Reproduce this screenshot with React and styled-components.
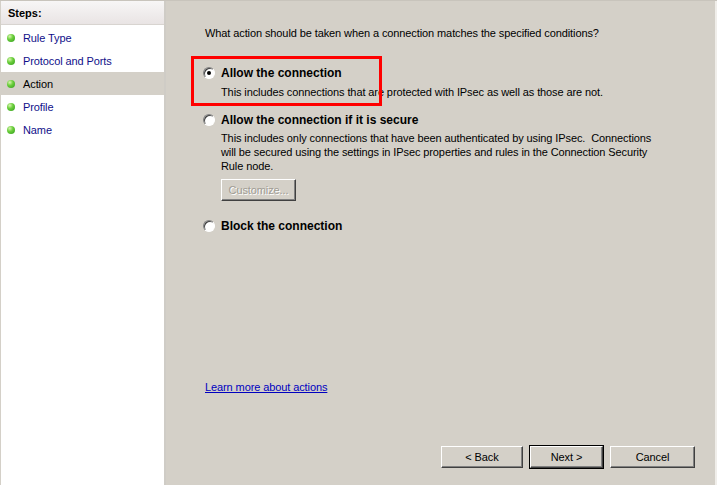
import styled, { createGlobalStyle } from 'styled-components';

const GlobalStyle = createGlobalStyle`
    html, body {
        margin: 0;
        padding: 0;
        background: #d4d0c8;
    }
    body {
        font-family: "Liberation Sans", Arial, sans-serif;
        font-size: 11px;
        letter-spacing: -0.1px;
        color: #000;
    }
`;

const steps = ['Rule Type', 'Protocol and Ports', 'Action', 'Profile', 'Name'];

function App() {
    return (
        <>
            <GlobalStyle />
            <Wizard>
                <StepsPanel>
                    <StepsHeader>Steps:</StepsHeader>
                    {steps.map((s) => (
                        <StepItem key={s} active={s === 'Action'}>
                            <Bullet />
                            {s}
                        </StepItem>
                    ))}
                </StepsPanel>

                <Content>
                    <Question>What action should be taken when a connection matches the specified conditions?</Question>

                    <Option top={26}>
                        <Highlight />
                        <Radio checked />
                        <OptionBody>
                            <OptionTitle>Allow the connection</OptionTitle>
                            <Description gap={5}>This includes connections that are protected with IPsec as well as those are not.</Description>
                        </OptionBody>
                    </Option>

                    <Option top={14}>
                        <Radio />
                        <OptionBody>
                            <OptionTitle>Allow the connection if it is secure</OptionTitle>
                            <Description gap={4}>
                                This includes only connections that have been authenticated by using IPsec.&nbsp; Connections
                                will be secured using the settings in IPsec properties and rules in the Connection Security
                                Rule node.
                            </Description>
                            <Button disabled small>Customize...</Button>
                        </OptionBody>
                    </Option>

                    <Option top={18}>
                        <Radio />
                        <OptionBody>
                            <OptionTitle>Block the connection</OptionTitle>
                        </OptionBody>
                    </Option>

                    <Spacer />
                    <LearnLink href="#">Learn more about actions</LearnLink>

                    <ButtonRow>
                        <Button>&lt; Back</Button>
                        <Button primary>Next &gt;</Button>
                        <Button wide>Cancel</Button>
                    </ButtonRow>
                </Content>
            </Wizard>
        </>
    );
}

const Wizard = styled.div`
    display: flex;
    width: 717px;
    height: 485px;
    overflow: hidden;
    box-sizing: border-box;
    border-top: 1px solid #c8c4bc;
`;

const StepsPanel = styled.div`
    width: 166px;
    flex-shrink: 0;
    background: #fff;
    box-sizing: border-box;
    border-left: 1px solid #d4d0c8;
    border-right: 2px solid #cfccc6;
`;

const StepsHeader = styled.div`
    height: 23px;
    display: flex;
    align-items: center;
    padding-left: 7px;
    font-weight: bold;
    font-size: 11px;
    letter-spacing: 0;
    background: linear-gradient(#f7f6f6, #e9e4e4);
    border-bottom: 1px solid #d8d4d0;
    margin-bottom: 1px;
`;

const StepItem = styled.div`
    height: 23px;
    display: flex;
    align-items: center;
    padding-left: 6px;
    gap: 8px;
    color: ${(p) => (p.active ? '#000' : '#10108a')};
    background: ${(p) => (p.active ? '#d4d0c8' : 'transparent')};
`;

const Bullet = styled.span`
    width: 8px;
    height: 8px;
    border-radius: 50%;
    background: radial-gradient(circle at 35% 30%, #d8f5b0 0%, #6ccf3c 40%, #2f9a1c 100%);
`;

const Content = styled.div`
    flex: 1;
    display: flex;
    flex-direction: column;
    padding: 25px 20px 17px 37px;
    background: #d4d0c8;
    border-right: 2px solid #f0eeea;
`;

const Question = styled.div`
    margin-left: 2px;
    line-height: 14px;
`;

const Option = styled.div`
    position: relative;
    display: flex;
    align-items: flex-start;
    gap: 6px;
    margin-top: ${(p) => p.top}px;
`;

const Highlight = styled.div`
    position: absolute;
    left: -12px;
    top: -10px;
    width: 185px;
    height: 44px;
    border: 3px solid #ff0000;
    pointer-events: none;
`;

const Radio = styled.span`
    width: 12px;
    height: 12px;
    flex-shrink: 0;
    margin-top: 1px;
    border-radius: 50%;
    box-sizing: border-box;
    background: #fff;
    border: 1px solid;
    border-color: #808080 #fff #fff #808080;
    box-shadow: inset 1px 1px 0 #404040;
    display: flex;
    align-items: center;
    justify-content: center;
    &::after {
        content: '';
        width: 4px;
        height: 4px;
        border-radius: 50%;
        background: #000;
        display: ${(p) => (p.checked ? 'block' : 'none')};
    }
`;

const OptionBody = styled.div`
    display: flex;
    flex-direction: column;
    align-items: flex-start;
`;

const OptionTitle = styled.div`
    font-weight: bold;
    font-size: 12px;
    line-height: 14px;
    letter-spacing: 0;
`;

const Description = styled.div`
    margin-top: ${(p) => p.gap}px;
    line-height: 14px;
    width: 440px;
`;

const Spacer = styled.div`
    flex: 1;
`;

const LearnLink = styled.a`
    margin-left: 2px;
    color: #0000c0;
    text-decoration: underline;
    line-height: 14px;
    align-self: flex-start;
`;

const ButtonRow = styled.div`
    display: flex;
    justify-content: flex-end;
    gap: 7px;
    margin-top: 52px;
`;

const Button = styled.button`
    font-family: "Liberation Sans", Arial, sans-serif;
    font-size: 11px;
    letter-spacing: -0.1px;
    height: 22px;
    width: ${(p) => (p.small ? 75 : p.wide ? 85 : p.primary ? 73 : 82)}px;
    margin-top: ${(p) => (p.small ? 6 : 0)}px;
    background: #d4d0c8;
    color: ${(p) => (p.disabled ? '#a09c94' : '#000')};
    text-shadow: ${(p) => (p.disabled ? '1px 1px 0 #fff' : 'none')};
    border: 1px solid;
    border-color: #fff #404040 #404040 #fff;
    box-shadow: inset -1px -1px 0 #808080;
    outline: ${(p) => (p.primary ? '1px solid #000' : 'none')};
    outline-offset: 0;
    padding: 0;
`;

export default App;
